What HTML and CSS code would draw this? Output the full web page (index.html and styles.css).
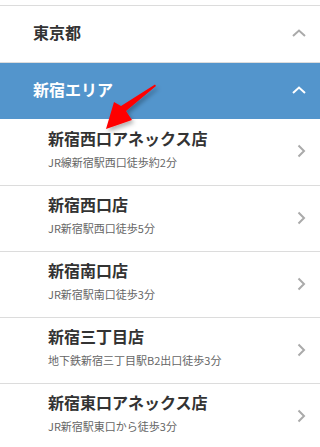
FILE: index.html
```html
<!DOCTYPE html>
<html lang="ja">
<head>
<meta charset="utf-8">
<link rel="stylesheet" href="styles.css">
</head>
<body>
<div class="menu">
  <div class="pref">
    <span class="pref-label">東京都</span>
    <svg class="up" width="14" height="8" viewBox="0 0 14 8"><path d="M1 7 L7 1.5 L13 7" fill="none" stroke="#aaa" stroke-width="2"/></svg>
  </div>
  <div class="area">
    <span class="area-label">新宿エリア</span>
    <svg class="up" width="14" height="8" viewBox="0 0 14 8"><path d="M1 7 L7 1.5 L13 7" fill="none" stroke="#fff" stroke-width="2"/></svg>
  </div>
  <ul class="shops">
    <li class="shop first">
      <div class="shop-text"><div class="shop-name">新宿西口アネックス店</div><div class="shop-access">JR線新宿駅西口徒歩約2分</div></div>
      <svg class="chev" width="9" height="14" viewBox="0 0 9 14"><path d="M1.5 1.5 L7 7 L1.5 12.5" fill="none" stroke="#aaa" stroke-width="2"/></svg>
    </li>
    <li class="shop">
      <div class="shop-text"><div class="shop-name">新宿西口店</div><div class="shop-access">JR新宿駅西口徒歩5分</div></div>
      <svg class="chev" width="9" height="14" viewBox="0 0 9 14"><path d="M1.5 1.5 L7 7 L1.5 12.5" fill="none" stroke="#aaa" stroke-width="2"/></svg>
    </li>
    <li class="shop">
      <div class="shop-text"><div class="shop-name">新宿南口店</div><div class="shop-access">JR新宿駅南口徒歩3分</div></div>
      <svg class="chev" width="9" height="14" viewBox="0 0 9 14"><path d="M1.5 1.5 L7 7 L1.5 12.5" fill="none" stroke="#aaa" stroke-width="2"/></svg>
    </li>
    <li class="shop">
      <div class="shop-text"><div class="shop-name">新宿三丁目店</div><div class="shop-access">地下鉄新宿三丁目駅B2出口徒歩3分</div></div>
      <svg class="chev" width="9" height="14" viewBox="0 0 9 14"><path d="M1.5 1.5 L7 7 L1.5 12.5" fill="none" stroke="#aaa" stroke-width="2"/></svg>
    </li>
    <li class="shop">
      <div class="shop-text"><div class="shop-name">新宿東口アネックス店</div><div class="shop-access">JR新宿駅東口から徒歩3分</div></div>
      <svg class="chev" width="9" height="14" viewBox="0 0 9 14"><path d="M1.5 1.5 L7 7 L1.5 12.5" fill="none" stroke="#aaa" stroke-width="2"/></svg>
    </li>
  </ul>
</div>
<svg class="annot" width="320" height="447" viewBox="0 0 320 447">
  <defs>
    <filter id="sh" x="-20%" y="-20%" width="150%" height="150%">
      <feDropShadow dx="2" dy="3" stdDeviation="2" flood-color="#000" flood-opacity="0.3"/>
    </filter>
  </defs>
  <polygon filter="url(#sh)" fill="#ff0000" points="155,84.5 156,86 126,111 132,120 106,129 114,102 121,106"/>
</svg>
</body>
</html>
```
FILE: styles.css
```css
html, body {
  margin: 0;
  padding: 0;
  background: #fff;
}
body {
  width: 320px;
  height: 447px;
  overflow: hidden;
  position: relative;
  font-family: "Noto Sans CJK JP", "Noto Sans", sans-serif;
  color: #333;
}
.menu {
  padding-top: 5px;
}
.pref {
  border-top: 1px solid #dcdcdc;
  border-bottom: 1px solid #dcdcdc;
  height: 56px;
  display: flex;
  align-items: center;
  justify-content: space-between;
  padding: 0 14px 0 33px;
}
.pref-label {
  font-size: 16px;
  font-weight: bold;
  color: #333;
  margin-bottom: 4px;
}
.area {
  background: #5395cc;
  height: 56px;
  display: flex;
  align-items: center;
  justify-content: space-between;
  padding: 0 14px 0 33px;
}
.area-label {
  font-size: 16px;
  font-weight: bold;
  color: #fff;
  margin-bottom: 4px;
}
.up {
  display: block;
  margin-top: -2px;
}
.shops {
  list-style: none;
  margin: 0;
  padding: 0;
}
.shop {
  height: 65px;
  border-bottom: 1px solid #dcdcdc;
  display: flex;
  align-items: center;
  justify-content: space-between;
  padding: 0 14px 0 48px;
}
.shop.first {
  height: 66px;
}
.shop-text {
  display: flex;
  flex-direction: column;
  gap: 7px;
  margin-bottom: 8px;
}
.shop-name {
  font-size: 16px;
  font-weight: bold;
  color: #333;
  line-height: 20px;
}
.shop-access {
  font-size: 11px;
  color: #666;
  line-height: 14px;
}
.chev {
  display: block;
  margin-top: -2px;
}
.annot {
  position: absolute;
  left: 0;
  top: 0;
  pointer-events: none;
}
```
